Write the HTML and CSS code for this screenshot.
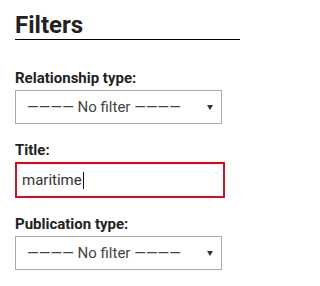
FILE: index.html
```html
<!DOCTYPE html>
<html lang="en">
<head>
<meta charset="utf-8">
<title>Filters</title>
<link rel="stylesheet" href="styles.css">
</head>
<body>
<div class="filters">
  <h2 class="filters__title">Filters</h2>
  <div class="field">
    <label class="field__label" for="rel">Relationship type:</label>
    <div class="select">
      <select id="rel" class="select__control">
        <option>———— No filter ————</option>
      </select>
      <svg class="select__arrow" width="6" height="5" viewBox="0 0 6 5"><polygon points="0,0 6,0 3,5"/></svg>
    </div>
  </div>
  <div class="field">
    <label class="field__label">Title:</label>
    <div class="textbox" role="textbox"><span class="textbox__value">maritime</span><span class="textbox__caret"></span></div>
  </div>
  <div class="field">
    <label class="field__label" for="pub">Publication type:</label>
    <div class="select">
      <select id="pub" class="select__control">
        <option>———— No filter ————</option>
      </select>
      <svg class="select__arrow" width="6" height="5" viewBox="0 0 6 5"><polygon points="0,0 6,0 3,5"/></svg>
    </div>
  </div>
</div>
</body>
</html>
```
FILE: styles.css
```css
html, body {
  margin: 0;
  padding: 0;
  background: #fff;
}
body {
  font-family: Roboto, "Liberation Sans", sans-serif;
  color: #222;
}
.filters {
  width: 225px;
  padding-left: 15px;
}
.filters__title {
  margin: 12px 0 0;
  font-size: 24px;
  font-weight: 700;
  line-height: 27px;
  color: #222;
  border-bottom: 1px solid #000;
}
.field {
  display: flex;
  flex-direction: column;
  align-items: flex-start;
}
.filters__title + .field {
  margin-top: 29px;
}
.field + .field {
  margin-top: 17px;
}
.field__label {
  font-size: 15px;
  font-weight: 700;
  line-height: 18px;
  color: #222;
  margin-bottom: 3px;
}
.select {
  position: relative;
  width: 207px;
  height: 34px;
}
.select__control {
  appearance: none;
  -webkit-appearance: none;
  box-sizing: border-box;
  width: 100%;
  height: 100%;
  margin: 0;
  padding: 0 0 0 11px;
  border: 1px solid #aaa;
  border-radius: 0;
  background: #fff;
  font-family: Roboto, "Liberation Sans", sans-serif;
  font-size: 15px;
  color: #444;
}
.select__arrow {
  position: absolute;
  right: 9px;
  top: 15px;
  fill: #333;
}
.textbox {
  box-sizing: border-box;
  width: 210px;
  height: 36px;
  display: flex;
  align-items: center;
  padding: 0 5px;
  border: 2px solid #c9142a;
  border-top-color: #e8000f;
  font-size: 15px;
  color: #333;
}
.textbox__caret {
  width: 1px;
  height: 17px;
  background: #111;
  margin-left: 1px;
}
```
